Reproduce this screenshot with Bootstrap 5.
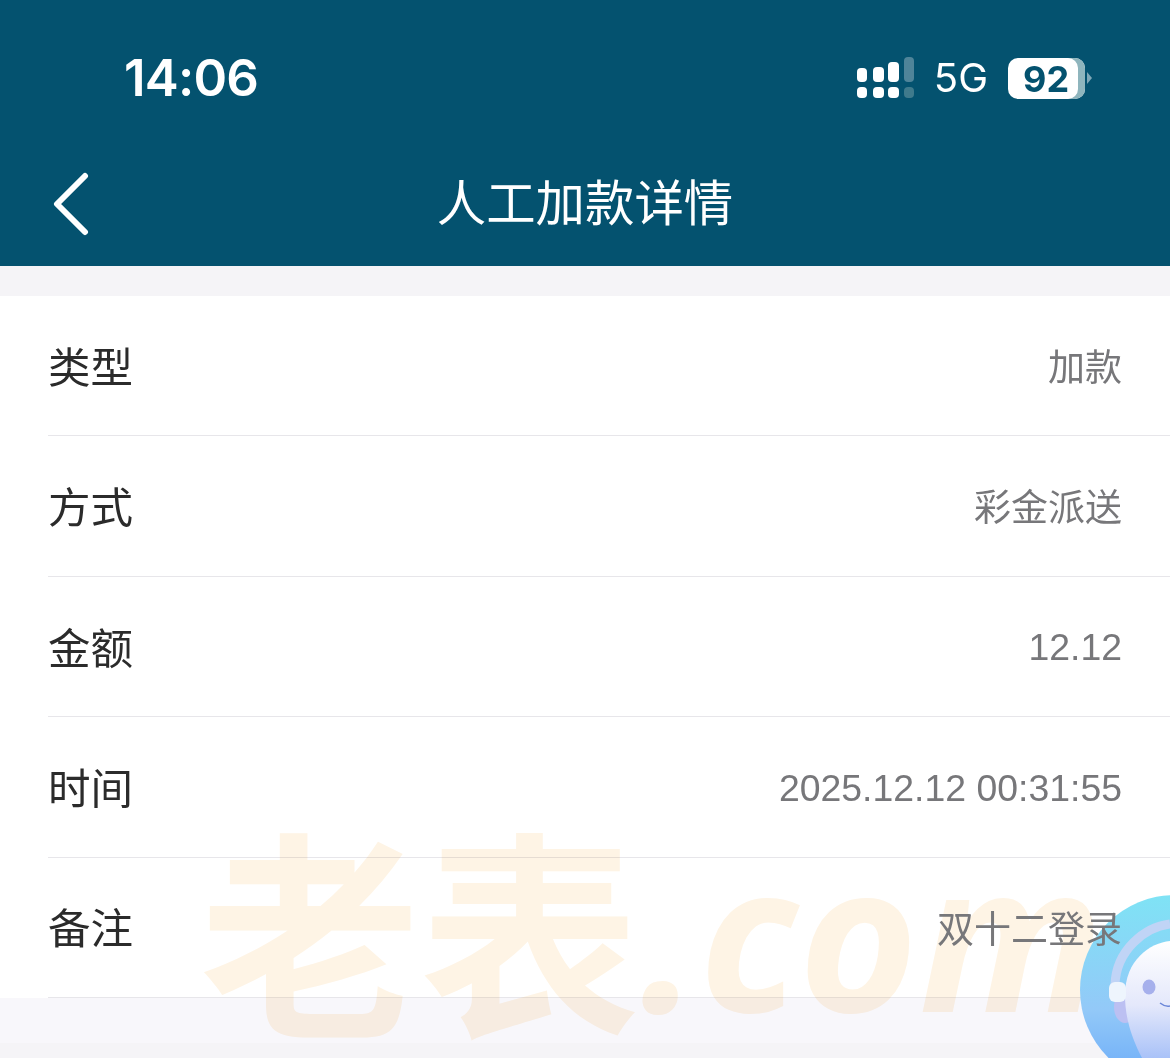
<!DOCTYPE html>
<html lang="zh-CN">
<head>
  <meta charset="UTF-8">
  <meta name="viewport" content="width=device-width, initial-scale=1.0">
  <title>人工加款详情</title>
  <link href="https://cdn.jsdelivr.net/npm/bootstrap@5.3.0/dist/css/bootstrap.min.css" rel="stylesheet">
  <style>
    html, body { height: 100%; }
    body { background: #f5f4f7; font-family: "Liberation Sans", "Noto Sans CJK SC", sans-serif; overflow: hidden; }
    .page-wrap { height: 1058px; overflow: hidden; }
    .top-head { background: #04526f; height: 266px; color: #fff; }
    .status-line { height: 150px; padding: 48px 78px 0 124px; }
    .clock { font-family: Inter, "Liberation Sans", sans-serif; font-size: 51px; font-weight: 600; line-height: 60px; letter-spacing: -.8px; }
    .net-text { font-family: Inter, "Liberation Sans", sans-serif; font-size: 40px; line-height: 60px; margin: 0 20px 0 18px; }
    .batt-body { width: 77px; height: 41px; background: #fff; border-radius: 10px; color: #04526f; font-family: Inter, "Liberation Sans", sans-serif; font-size: 36px; font-weight: 700; line-height: 42px; padding-left: 15px; box-shadow: inset -7px 0 0 #8fb5bd; }
    .batt-tip { width: 0; height: 0; margin-left: 2px; border-left: 5px solid #7ea7b6; border-top: 6px solid transparent; border-bottom: 6px solid transparent; }
    .title-line { height: 116px; padding-top: 16px; }
    .back-btn { left: 53px; top: 22px; }
    .head-title { font-size: 49.4px; line-height: 76px; font-weight: 400; margin: 0; }
    .detail-box { background: #fff; margin-top: 30px; padding-left: 48px; }
    .detail-row { height: 140.4px; border-bottom: 1px solid #e7e6ea; padding: 6px 48px 0 0; }
    .row-name { font-size: 42.5px; color: #2b2b2b; }
    .row-val { font-size: 37px; color: #77777a; position: relative; z-index: 3; }
    .row-val-num { font-size: 37.4px; margin-bottom: 4px; }
    .foot-band { background: #f8f7fb; height: 45px; }
    .water-mark { left: 200px; top: 780px; font-size: 220px; line-height: 290px; font-weight: 700; color: #fef4e5; white-space: nowrap; mix-blend-mode: multiply; font-family: "Noto Sans CJK SC", sans-serif; }
    .water-latin { font-family: "Open Sans", sans-serif; font-style: italic; font-weight: 700; font-size: 204px; letter-spacing: 1px; vertical-align: 9px; }
    .kefu-ball { left: 1070px; top: 885px; }
  </style>
</head>
<body>
  <div class="page-wrap position-relative">
    <!-- 顶部 -->
    <header class="top-head">
      <div class="status-line d-flex justify-content-between align-items-start">
        <span class="clock">14:06</span>
        <div class="d-flex align-items-center">
          <svg width="60" height="44" viewBox="0 0 60 44">
            <g fill="#fff">
              <rect x="1" y="12" width="10" height="14" rx="4"/>
              <rect x="17" y="11" width="11" height="15" rx="4"/>
              <rect x="32" y="6" width="11" height="20" rx="4"/>
              <rect x="1" y="31" width="10" height="11" rx="4"/>
              <rect x="17" y="31" width="11" height="11" rx="4"/>
              <rect x="32" y="31" width="11" height="11" rx="4"/>
            </g>
            <rect x="48" y="1" width="10" height="25" rx="4" fill="#4f8499"/>
            <rect x="48" y="31" width="10" height="11" rx="4" fill="#3f7a8c"/>
          </svg>
          <span class="net-text">5G</span>
          <div class="batt-body">92</div>
          <div class="batt-tip"></div>
        </div>
      </div>
      <div class="title-line position-relative d-flex justify-content-center">
        <svg class="back-btn position-absolute" width="38" height="64" viewBox="0 0 38 64" fill="none">
          <path d="M32 4 L4 32 L32 60" stroke="#fff" stroke-width="6" stroke-linecap="round" stroke-linejoin="round"/>
        </svg>
        <h1 class="head-title">人工加款详情</h1>
      </div>
    </header>

    <!-- 详情 -->
    <div class="detail-box">
      <div class="detail-row d-flex justify-content-between align-items-center">
        <span class="row-name">类型</span><span class="row-val">加款</span>
      </div>
      <div class="detail-row d-flex justify-content-between align-items-center">
        <span class="row-name">方式</span><span class="row-val">彩金派送</span>
      </div>
      <div class="detail-row d-flex justify-content-between align-items-center">
        <span class="row-name">金额</span><span class="row-val row-val-num">12.12</span>
      </div>
      <div class="detail-row d-flex justify-content-between align-items-center">
        <span class="row-name">时间</span><span class="row-val row-val-num">2025.12.12 00:31:55</span>
      </div>
      <div class="detail-row d-flex justify-content-between align-items-center">
        <span class="row-name">备注</span><span class="row-val">双十二登录</span>
      </div>
    </div>
    <div class="foot-band"></div>

    <!-- 水印 -->
    <div class="water-mark position-absolute">老表<span class="water-latin">.com</span></div>

    <!-- 客服 -->
    <svg class="kefu-ball position-absolute" width="100" height="173" viewBox="0 0 100 173">
      <defs>
        <linearGradient id="ballFill" x1="0" y1="0" x2="0" y2="1">
          <stop offset="0" stop-color="#7fe3f5"/>
          <stop offset=".6" stop-color="#93c9f8"/>
          <stop offset="1" stop-color="#6aaaf8"/>
        </linearGradient>
        <linearGradient id="faceFill" x1="0" y1="0" x2="0" y2="1">
          <stop offset="0" stop-color="#ffffff"/>
          <stop offset=".55" stop-color="#e4e8fb"/>
          <stop offset="1" stop-color="#a9c2f8"/>
        </linearGradient>
      </defs>
      <circle cx="105" cy="105" r="95" fill="url(#ballFill)"/>
      <path d="M45 100 C46 65 75 42 100 39" fill="none" stroke="#c0d4f6" stroke-width="9"/>
      <ellipse cx="55" cy="122" rx="11" ry="16" fill="#bcc0f2"/>
      <path d="M55 110 C55 75 80 58 100 56 L100 173 L72 173 C60 150 55 130 55 110Z" fill="url(#faceFill)"/>
      <rect x="39" y="97" width="17" height="20" rx="6" fill="#eef5fd"/>
      <ellipse cx="79" cy="102" rx="6.5" ry="7.5" fill="#a6b0ec"/>
      <path d="M90 118 Q95 122 100 121" fill="none" stroke="#6a86d8" stroke-width="1.5"/>
    </svg>
  </div>

  <script src="https://cdn.jsdelivr.net/npm/bootstrap@5.3.0/dist/js/bootstrap.bundle.min.js"></script>
</body>
</html>
